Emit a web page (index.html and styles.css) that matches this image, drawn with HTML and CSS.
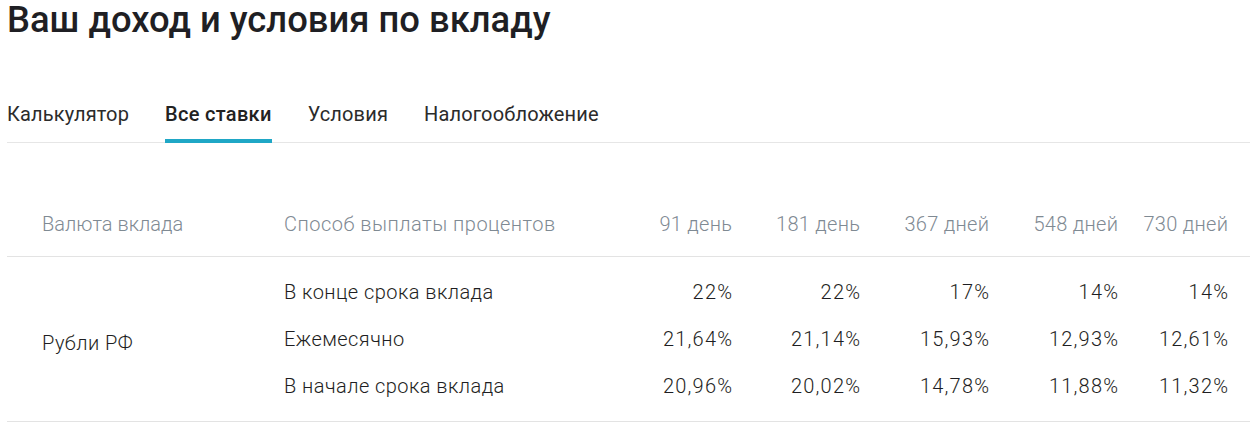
FILE: index.html
```html
<!DOCTYPE html>
<html lang="ru">
<head>
<meta charset="utf-8">
<link rel="stylesheet" href="styles.css">
</head>
<body>
<div class="page">
  <h1 class="title">Ваш доход и условия по вкладу</h1>
  <nav class="tabs">
    <span class="tab">Калькулятор</span>
    <span class="tab active">Все ставки</span>
    <span class="tab">Условия</span>
    <span class="tab">Налогообложение</span>
  </nav>
  <div class="rates">
    <div class="head">
      <div class="c1">Валюта вклада</div>
      <div class="c2">Способ выплаты процентов</div>
      <div class="num">91 день</div>
      <div class="num">181 день</div>
      <div class="num">367 дней</div>
      <div class="num">548 дней</div>
      <div class="num">730 дней</div>
    </div>
    <div class="body">
      <div class="currency">Рубли РФ</div>
      <div class="rows">
        <div class="row">
          <div class="c2">В конце срока вклада</div>
          <div class="num">22%</div><div class="num">22%</div><div class="num">17%</div><div class="num">14%</div><div class="num">14%</div>
        </div>
        <div class="row">
          <div class="c2">Ежемесячно</div>
          <div class="num">21,64%</div><div class="num">21,14%</div><div class="num">15,93%</div><div class="num">12,93%</div><div class="num">12,61%</div>
        </div>
        <div class="row">
          <div class="c2">В начале срока вклада</div>
          <div class="num">20,96%</div><div class="num">20,02%</div><div class="num">14,78%</div><div class="num">11,88%</div><div class="num">11,32%</div>
        </div>
      </div>
    </div>
  </div>
</div>
</body>
</html>
```

FILE: styles.css
```css
* { box-sizing: border-box; }
html, body { margin: 0; padding: 0; background: #fff; }
body {
  font-family: Roboto, "Liberation Sans", sans-serif;
  color: #222;
}
.page {
  padding-left: 7px;
  width: 1250px;
}
.title {
  margin: 0;
  font-size: 36.4px;
  line-height: 40px;
  font-weight: 500;
  color: #1f1f24;
}
.tabs {
  display: flex;
  gap: 36px;
  margin-top: 60px;
  border-bottom: 1px solid #e6e6e6;
}
.tab {
  font-size: 20px;
  line-height: 28px;
  letter-spacing: 0.15px;
  color: #2b2b2b;
  padding-bottom: 11px;
  border-bottom: 4px solid transparent;
  margin-bottom: -1px;
}
.tab.active {
  color: #222;
  font-weight: 500;
  letter-spacing: 0.3px;
  border-bottom-color: #1fa7c6;
}
.rates {
  margin-top: 69px;
  font-size: 20px;
  line-height: 24px;
  font-weight: 300;
}
.head {
  display: grid;
  grid-template-columns: 277px 320px 128px 128px 129px 129px 110px;
  color: #7f8a93;
  letter-spacing: 0.5px;
  padding-bottom: 20px;
  border-bottom: 1px solid #e3e3e3;
}
.head .c1 { letter-spacing: 0; }
.head .num { letter-spacing: 0.3px; margin-right: -0.3px; }
.c1 { padding-left: 35px; }
.num { text-align: right; }
.body {
  display: grid;
  grid-template-columns: 277px 1fr;
  padding: 12px 0 11px;
  border-bottom: 1px solid #e3e3e3;
  color: #1e1e22;
  letter-spacing: 0.45px;
}
.row .num {
  letter-spacing: 1.2px;
  margin-right: -1.2px;
}
.currency {
  padding-left: 35px;
  align-self: center;
  padding-top: 7px;
}
.row {
  display: grid;
  grid-template-columns: 320px 128px 128px 129px 129px 110px;
  line-height: 47px;
}
```
